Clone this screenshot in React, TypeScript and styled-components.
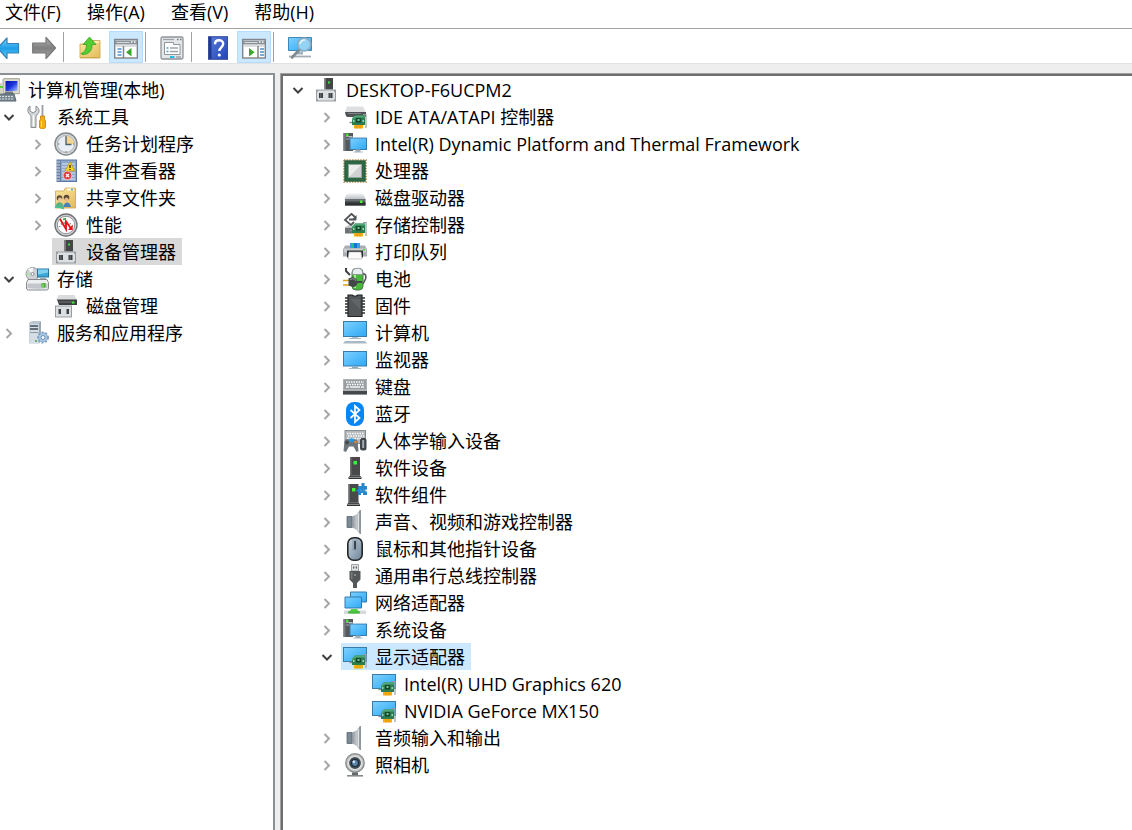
import React, { useState } from 'react';
import styled, { createGlobalStyle } from 'styled-components';

const uiFont = '"Open Sans", "Noto Sans CJK SC", sans-serif';

const GlobalStyle = createGlobalStyle`
  * { box-sizing: border-box; }
  body { margin: 0; background: #eeeeee; color: #000; font-family: ${uiFont}; font-size: 18px; }
  button { font: inherit; color: inherit; background: none; border: 0; padding: 0; }
  ul { list-style: none; margin: 0; padding: 0; }
`;

const Window = styled.div`
  display: flex;
  flex-direction: column;
  min-height: 100vh;
  overflow: hidden;
`;

const MenuBar = styled.nav`
  display: flex;
  gap: 26px;
  height: 28px;
  padding: 0 5px;
  background: #fff;
`;

const MenuItem = styled.button`
  height: 25px;
  line-height: 25px;
  white-space: nowrap;
`;

const Toolbar = styled.div`
  display: flex;
  align-items: center;
  gap: 2px;
  height: 36px;
  padding-top: 2px;
  margin-left: -9px;
  background: #fff;
  border-top: 1px solid #a3a3a3;
  border-bottom: 1px solid #e2e2e2;
`;

const ToolButton = styled.button<{ $active?: boolean }>`
  display: flex;
  align-items: center;
  justify-content: center;
  flex: none;
  width: 34px;
  height: 32px;
  padding-top: 2px;
  background: ${(p) => (p.$active ? '#cce8ff' : 'transparent')};
  border: 1px solid ${(p) => (p.$active ? '#b3dcff' : 'transparent')};
`;

const Separator = styled.span`
  flex: none;
  width: 2px;
  height: 30px;
  margin-right: 6px;
  background: #fff;
  border-left: 1px solid #a0a0a0;
`;

const Panes = styled.main`
  display: grid;
  grid-template-columns: 275px minmax(0, 1fr);
  gap: 5px;
  flex: 1;
  padding-top: 9px;
`;

const ConsolePane = styled.section`
  overflow: hidden;
  padding-top: 1px;
  background: #fff;
  border: solid #8b9097;
  border-width: 2px 2px 0 0;
`;

const DevicePane = styled.section`
  overflow: hidden;
  padding: 2px 0 24px 8px;
  background: #fff;
  border: solid #a0a0a0;
  border-width: 1px 0 0 1px;
  box-shadow: inset 2px 2px 0 #6e6e6e;
`;

const ScrolledTree = styled.ul`
  margin-left: -29px;
`;

const Row = styled.div<{ $depth: number }>`
  display: flex;
  align-items: center;
  height: 27px;
  padding-left: ${(p) => p.$depth * 29}px;
`;

const Twisty = styled.button`
  flex: none;
  display: flex;
  width: 23px;
  height: 27px;
  padding: 8px 0 0 3px;
`;

const NodeButton = styled.button<{ $tone?: string }>`
  display: flex;
  align-items: center;
  gap: 8px;
  height: 27px;
  padding: 0 6px 0 2px;
  white-space: nowrap;
  background: ${(p) => p.$tone || 'transparent'};
`;

const NodeText = styled.span`
  line-height: 26px;
`;

const Defs = styled.svg`
  position: absolute;
`;

/* ---------- shared drawing parts ---------- */

const Gradients = () => (
  <Defs width="0" height="0" aria-hidden="true">
    <defs>
      <linearGradient id="screen" x1="0" y1="0" x2="1" y2="1">
        <stop offset="0" stopColor="#7fd0ff" /><stop offset=".5" stopColor="#55bdfb" /><stop offset="1" stopColor="#2fa8f5" />
      </linearGradient>
      <linearGradient id="blueArrow" x1="0" y1="0" x2="0" y2="1">
        <stop offset="0" stopColor="#7ad3fb" /><stop offset=".5" stopColor="#1f9ee8" /><stop offset="1" stopColor="#5ccdf8" />
      </linearGradient>
      <linearGradient id="grayArrow" x1="0" y1="0" x2="0" y2="1">
        <stop offset="0" stopColor="#b5b5b5" /><stop offset=".5" stopColor="#7f7f7f" /><stop offset="1" stopColor="#a9a9a9" />
      </linearGradient>
      <linearGradient id="folder" x1="0" y1="0" x2="1" y2="1">
        <stop offset="0" stopColor="#fbe7a4" /><stop offset="1" stopColor="#e3bb58" />
      </linearGradient>
      <linearGradient id="metal" x1="0" y1="0" x2="0" y2="1">
        <stop offset="0" stopColor="#f0f2f4" /><stop offset="1" stopColor="#b9bdc2" />
      </linearGradient>
      <linearGradient id="help" x1="0" y1="0" x2="1" y2="1">
        <stop offset="0" stopColor="#5a7bdc" /><stop offset="1" stopColor="#2346b4" />
      </linearGradient>
      <linearGradient id="speaker" x1="0" y1="0" x2="1" y2="0">
        <stop offset="0" stopColor="#8d949b" /><stop offset=".6" stopColor="#c5cacf" /><stop offset="1" stopColor="#8b9299" />
      </linearGradient>
      <linearGradient id="navy" x1="0" y1="0" x2="1" y2="1">
        <stop offset="0" stopColor="#0713a5" /><stop offset=".5" stopColor="#1a36e0" /><stop offset="1" stopColor="#a9c3ff" />
      </linearGradient>
      <linearGradient id="mouseBody" x1="0" y1="0" x2="1" y2="1">
        <stop offset="0" stopColor="#c9d5df" /><stop offset="1" stopColor="#6d8499" />
      </linearGradient>
    </defs>
  </Defs>
);

const Icon = ({ children }: { children: React.ReactNode }) => (
  <svg width="24" height="24" viewBox="0 0 24 24" aria-hidden="true">{children}</svg>
);

const Card = () => (
  <g>
    <path d="M6.500 17.500h3" stroke="#8b9094" strokeWidth="1.500" />
    <path d="M9 13.500l3-3h10v9.500H9z" fill="#2d7d51" />
    <path d="M9 13.500l3-3h10v2H13l-4 3z" fill="#4fa777" />
    <rect x="13" y="13" width="5" height="4.500" fill="#15472b" />
    <rect x="14.500" y="14" width="2" height="2" fill="#72c596" />
    <rect x="10" y="15" width="1.500" height="2" fill="#9ad4b2" />
    <rect x="19.500" y="15" width="1.500" height="2" fill="#9ad4b2" />
    <path d="M11 20h9v3.500h-9z" fill="#f5ad12" />
    <path d="M14 20.500v3M17 20.500v3" stroke="#d98a00" strokeWidth=".7" />
    <path d="M20 9.500h3v13.500" fill="none" stroke="#999fa3" strokeWidth="1.200" />
  </g>
);

const Base = () => (
  <g>
    <rect x="2.500" y="12" width="19" height="11" fill="#dcdfe1" stroke="#999da0" />
    <rect x="5" y="15" width="4" height="5" fill="#3b3e40" /><rect x="14.500" y="15" width="4" height="5" fill="#3b3e40" />
    <rect x="6" y="15" width="1.500" height="5" fill="#5f6366" /><rect x="15.500" y="15" width="1.500" height="5" fill="#5f6366" />
    <path d="M3 13h1M20 13h1M3 22h1M20 22h1" stroke="#777" />
  </g>
);

const Tower = () => (
  <g>
    <path d="M4.500 1h10v18.500h-10z" fill="#47494a" />
    <path d="M4.500 1h1.500v18.500h-1.500z" fill="#6a6d6f" />
    <rect x="8" y="5" width="3.500" height="3.500" fill="#3ef23a" />
    <path d="M4.500 19.500h10l1.500 2v1.500H3v-1.500z" fill="#303233" /><path d="M3.500 21.300h12" stroke="#a3a5a7" />
  </g>
);

const icons: Record<string, React.ReactNode> = {
  back: <path d="M1.500 12L11 2v5.500h11.500v9.500H11v5.500z" fill="url(#blueArrow)" stroke="#3381b8" strokeWidth="1.200" strokeLinejoin="round" />,
  forward: <path d="M23.500 12L14 1.500v5.500H.7v10H14v5.500z" fill="url(#grayArrow)" stroke="#777" strokeWidth="1.200" strokeLinejoin="round" />,
  up: <g>
    <path d="M2 8h9l2-3.500h9V22H2z" fill="url(#folder)" stroke="#c9a24b" strokeWidth=".8" />
    <path d="M14 6h7" stroke="#fff5cf" strokeWidth="1.500" />
    <path d="M3 17.500c4-1.500 5.500-4.500 5.500-9H5L11.500 1 18 8.500h-4c.5 6-3.500 10.500-10 10z" fill="#55cc32" stroke="#2c9c1d" strokeWidth=".7" />
    <path d="M2.500 21.500h19" stroke="#d1a849" />
  </g>,
  treePane: <g>
    <rect x=".7" y="3.500" width="22.600" height="18.500" fill="#fff" stroke="#7e858c" strokeWidth="1.400" />
    <path d="M1 4.500h22v4H1z" fill="#8b9299" /><path d="M2.500 6.500h13" stroke="#d8dcdf" /><path d="M17 6h1.500M20 6h1.500" stroke="#fff" strokeWidth="1.500" />
    <path d="M1.500 10h21" stroke="#c3c8cc" strokeWidth="1.200" />
    <path d="M9.500 10v12" stroke="#7e858c" strokeWidth="1.500" />
    <path d="M3.500 13h4M3.500 16h4M3.500 19h4" stroke="#4c90cb" strokeWidth="1.500" />
    <path d="M17.500 12v8.500L12 16.200z" fill="#37a82b" />
  </g>,
  actionPane: <g>
    <rect x=".7" y="3.500" width="22.600" height="18.500" fill="#fff" stroke="#7e858c" strokeWidth="1.400" />
    <path d="M1 4.500h22v4H1z" fill="#8b9299" /><path d="M2.500 6.500h13" stroke="#d8dcdf" /><path d="M17 6h1.500M20 6h1.500" stroke="#fff" strokeWidth="1.500" />
    <path d="M1.500 10h21" stroke="#c3c8cc" strokeWidth="1.200" />
    <path d="M16 10v12" stroke="#7e858c" strokeWidth="1.500" />
    <path d="M18 13h4M18 16h4M18 19h4" stroke="#4c90cb" strokeWidth="1.500" />
    <path d="M7 12v8.500l5.500-4.300z" fill="#37a82b" />
  </g>,
  properties: <g>
    <rect x="1" y="1" width="22" height="22" rx="1.500" fill="#e4e7e9" stroke="#8e9499" strokeWidth="1.300" />
    <path d="M3 3.500h11" stroke="#9da3a8" strokeWidth="1.300" /><path d="M17 3.500h1.500M20 3.500h1.500" stroke="#6f777d" strokeWidth="1.500" />
    <path d="M4.500 6.500h9v2h6.500v10h-15.500z" fill="#fff" stroke="#8f969b" />
    <path d="M6.500 12h2M6.500 15.500h2" stroke="#4b9fd0" strokeWidth="1.500" /><path d="M10 12h8M10 15.500h8" stroke="#9ea4a9" strokeWidth="1.300" />
    <path d="M10 21h4.500" stroke="#21bdeb" strokeWidth="2" /><path d="M16 21h5" stroke="#9ea4a9" strokeWidth="1.500" />
  </g>,
  help: <g>
    <rect x="2.500" y=".7" width="19" height="22.600" fill="url(#help)" stroke="#354d9c" />
    <path d="M3 1h2.500v22H3z" fill="#203a91" />
    <path d="M9 8.200c0-5.200 8.200-5.200 8.200-.4 0 3.400-3.900 3.600-3.900 7.200" fill="none" stroke="#fff" strokeWidth="2.400" /><circle cx="13.300" cy="19" r="1.600" fill="#fff" />
  </g>,
  scan: <g>
    <path d="M.5 1.500h23v13H.5z" fill="url(#screen)" stroke="#3b87b5" />
    <path d="M9 15.500h6v3H9z" fill="#9fb0bc" /><path d="M1 20.500h22" stroke="#a5adb4" strokeWidth="1.800" />
    <path d="M11.500 13.500L4 21.500" stroke="#7f8a92" strokeWidth="2.600" strokeLinecap="round" />
    <circle cx="16.200" cy="8.500" r="6.500" fill="#a5daf5" fillOpacity=".8" stroke="#8caabd" strokeWidth="1.600" />
    <path d="M12 8a4.500 4.500 0 015-4" fill="none" stroke="#e6f7ff" strokeWidth="1.500" />
  </g>,
  management: <g>
    <rect x="7" y=".7" width="17" height="15" rx="1" fill="#dcd9cb" stroke="#a09e93" />
    <rect x="9.500" y="3" width="12" height="10" fill="url(#navy)" />
    <path d="M0 5h6v10H0z" fill="#d6d3c6" /><path d="M3 9h4" stroke="#55d531" strokeWidth="2" />
    <path d="M9 13.500h8v3H9z" fill="#72787d" />
    <path d="M2 16h16l2 7H1z" fill="#7b8a92" stroke="#55656e" /><path d="M3 18.500h15M3 21h15" stroke="#d3dbe0" strokeDasharray="2 1" />
  </g>,
  tools: <g transform="translate(1 0)">
    <path d="M4 1v5l3 2 3-2V1c5 3 3 8 0 9.500v12H5v-12C1 8 1 3 4 1z" fill="#d5d8da" stroke="#888d91" />
    <path d="M7.500 10v11" stroke="#fff" strokeWidth="1.200" />
    <path d="M16.500 0v11" stroke="#999fa4" strokeWidth="1.800" />
    <path d="M14.500 11h4v3l1 2v6.500c0 1.500-6 1.500-6 0V16l1-2z" fill="#f3af13" stroke="#c57f00" strokeWidth=".8" /><path d="M15.500 16v6" stroke="#ffdf78" />
  </g>,
  clock: <g>
    <circle cx="12" cy="12" r="11" fill="#d7dadd" stroke="#84898d" strokeWidth="1.500" />
    <circle cx="12" cy="12" r="8.500" fill="#e9eff5" stroke="#a9afb4" />
    <path d="M12 12V4a8 8 0 018 8z" fill="#f3d493" />
    <path d="M12 4.500V12.500h5.500" fill="none" stroke="#4d6470" strokeWidth="1.400" />
    <path d="M12 4v1M12 19v1.500M4 12h1.500M19 12h1" stroke="#777" />
  </g>,
  events: <g>
    <rect x="3" y="1" width="19.500" height="21.500" fill="#8ea7cb" stroke="#5876a8" />
    <path d="M8 5h13M8 8h13M8 11h13M8 14h13M8 17h13M8 20h13" stroke="#dae5f3" />
    <path d="M3 1.500h4v21H3z" fill="#6680a5" /><path d="M2 3h4M2 6h4M2 9h4M2 12h4M2 15h4M2 18h4M2 21h4" stroke="#d6dadd" strokeWidth="1.200" />
    <path d="M16 3l5 9H11z" fill="#f9d41b" stroke="#b4921e" strokeWidth=".7" /><path d="M16 6v3M16 10v1" stroke="#4c3d07" strokeWidth="1.500" />
    <circle cx="13.500" cy="16.500" r="4.300" fill="#dc3e42" stroke="#ffd9d9" strokeWidth=".7" /><path d="M12 15l3 3M15 15l-3 3" stroke="#fff" strokeWidth="1.300" />
  </g>,
  shares: <g>
    <path d="M1.500 5h8l2-3h10v20h-20z" fill="url(#folder)" stroke="#cda550" strokeWidth=".8" /><path d="M13 3.500h7" stroke="#fff8dc" strokeWidth="2" /><path d="M17 3.500h2" stroke="#4b9ecb" strokeWidth="1.500" />
    <circle cx="5.500" cy="12" r="2.800" fill="#5e4c35" /><circle cx="6" cy="13.500" r="2" fill="#ecc59c" />
    <circle cx="12.500" cy="11.500" r="2.800" fill="#5b4735" /><circle cx="12.500" cy="13.500" r="2" fill="#e7b98b" />
    <path d="M1.500 22c0-7 7.500-8 8.500 0z" fill="#5cae86" /><path d="M9.500 21c.5-6 6.500-6 7.500 0z" fill="#4b81b8" />
    <path d="M1 21.500c4-2.500 6 1.500 9 .5" fill="none" stroke="#48c28d" strokeWidth="2" />
  </g>,
  performance: <g>
    <circle cx="12" cy="12" r="11" fill="#d1d3d5" stroke="#717578" strokeWidth="1.400" /><circle cx="12" cy="12" r="8.700" fill="#fff" stroke="#929699" />
    <path d="M5.500 14a7 7 0 0113 0" fill="none" stroke="#81898e" strokeWidth="2" strokeDasharray="1 2" /><path d="M9 6.500l3-1" stroke="#3d9c47" strokeWidth="1.500" />
    <path d="M6 6l6 10V8.500l5 7" fill="none" stroke="#e01919" strokeWidth="1.900" /><path d="M18.700 11.500v5.500H14z" fill="#e01919" />
  </g>,
  device: <g><path d="M10.500 0h8.500v11.500h-8.500z" fill="#434546" /><path d="M10.500 0h1.500v11h-1.500z" fill="#777" /><rect x="14" y="3.500" width="2" height="2" fill="#3ae33c" /><Base /></g>,
  storage: <g>
    <circle cx="7.500" cy="7" r="6.500" fill="#cfd2d4" stroke="#93999d" /><path d="M7.500 7L3 2.500a6 6 0 015-1.700z" fill="#f7f7f7" /><path d="M1.500 6L6 7l-4 3z" fill="#b6e2b3" /><circle cx="7.500" cy="7" r="1.500" fill="#fff" stroke="#8d9296" />
    <rect x="12.500" y="2" width="11" height="8" fill="#3ba8d8" stroke="#27739b" /><path d="M13 2.500h10v3l-10 2z" fill="#82d0ef" /><path d="M15 11.500h6" stroke="#9da5aa" />
    <path d="M3 12.500h19l1.500 3v5.500q0 2-2 2h-18q-2 0-2-2v-5.500z" fill="#eceef0" stroke="#868b90" /><path d="M2.500 16.500h20v4.500q-10 1.500-20 0z" fill="#c3c6cc" /><rect x="16.500" y="16" width="4" height="4.500" fill="#48ad31" /><path d="M18 16.500v4" stroke="#9aef79" />
  </g>,
  diskMgmt: <g><path d="M4.500 1h16l2.500 5H2z" fill="#d9dbdd" /><path d="M3 5.500h20V11H5z" fill="#3c3f41" /><path d="M5 8h13" stroke="#77797b" /><rect x="18" y="7.500" width="2.500" height="2" fill="#48ec3e" /><rect x="1.500" y="12" width="16" height="11" fill="#dcdfe1" stroke="#999da0" /><path d="M4.500 15h2.500v5H4.500zM12.500 15H15v5h-2.500z" fill="#3d4042" /></g>,
  services: <g transform="translate(1 0)">
    <path d="M3 2l3-2h9l-2 2v20.500H3z" fill="#bac6d0" /><path d="M13 2l2-2v20l-2 2.500z" fill="#9aa8b3" /><path d="M3.500 3h9v19h-9z" fill="#d5dee5" />
    <path d="M4 5h8M4 8h8" stroke="#3f4d57" strokeWidth="1.300" /><path d="M4 11.500h8" stroke="#8999a4" /><path d="M9 20h2" stroke="#3da944" strokeWidth="1.500" />
    <circle cx="17" cy="16.500" r="5" fill="#8eb1d1" stroke="#7fa3c6" strokeWidth="2" strokeDasharray="2 1.600" /><circle cx="17" cy="16.500" r="4" fill="#a9c7e2" /><circle cx="17" cy="16.500" r="2" fill="#f4f8fb" stroke="#6f94b8" />
  </g>,
  ide: <g><path d="M4 1.500h16l3 6H2z" fill="#dddfe1" /><path d="M2 7h21v5H4q-2-2-2-5z" fill="#505355" /><path d="M5 8.500h13" stroke="#808386" /><Card /></g>,
  system: <g>
    <path d="M.5 1h9.500v18H.5z" fill="#55595c" /><path d="M.5 1h2v18h-2z" fill="#777c7f" /><path d="M3 4.500h6M3 7h6" stroke="#a4a9ac" /><rect x="3" y="1.500" width="2.500" height="2.500" fill="#40e52c" />
    <rect x="7" y="6" width="16.500" height="11.500" fill="url(#screen)" stroke="#377cad" /><path d="M6 5h18" stroke="#e7eef2" strokeWidth=".6" /><path d="M13 18h4v1.500h-4zM10.500 20h9" fill="#91a3b1" stroke="#a3b2be" />
  </g>,
  cpu: <g>
    <rect x="1" y="1" width="22" height="22" fill="none" stroke="#b5924b" strokeWidth="1.600" strokeDasharray="1.500 1.200" /><rect x="1.800" y="1.800" width="20.400" height="20.400" fill="#2d6947" stroke="#19472d" strokeWidth=".7" />
    <rect x="5.500" y="5.500" width="13" height="13" fill="#cfd2d1" stroke="#8fa79a" /><path d="M6 6h12L6 18z" fill="#ededed" />
  </g>,
  disk: <g transform="translate(0 1)"><path d="M5 6.500h14q2 0 3.500 6h-21q1.500-6 3.500-6z" fill="url(#metal)" /><path d="M2 12h20.500v6.500H2z" fill="#505457" /><path d="M2 15.500h20.500v3H2z" fill="#2f3233" /><path d="M2 13h20" stroke="#84898c" /><rect x="17" y="13.500" width="2.500" height="2.500" fill="#4cf142" /></g>,
  storageCtl: <g><path d="M2 14.500h15v6H2z" fill="#6d7275" /><path d="M2 14l4-2 5 2z" fill="#c9cccd" /><path d="M13 5L8.500.8 2 7l6 5 3-3M6 6.500h7" fill="none" stroke="#515558" strokeWidth="1.800" /><path d="M13.500 2v5h-5z" fill="#515558" /><Card /></g>,
  printer: <g>
    <path d="M7 3h10v5H7z" fill="#3c9fe0" /><path d="M8 3h3v5H8z" fill="#21bd83" /><path d="M11 3h3v5h-3z" fill="#1970d3" />
    <path d="M2 5.500h5V8h10V5.500h5l2 4v7H0v-7z" fill="#a9adb0" /><path d="M1 8.500h22v4H1z" fill="#c9ccce" /><path d="M4 10.500h16v7H4z" fill="#2c2e30" /><path d="M6 12h12l1 7H5z" fill="#fafafa" stroke="#aeb2b4" strokeWidth=".6" /><rect x="20" y="9" width="2" height="1.500" fill="#47df33" />
  </g>,
  battery: <g>
    <rect x="9" y="1.500" width="11" height="21.500" rx="4" fill="#49b73b" stroke="#4f7850" /><path d="M9.500 5c0-5 10-5 10 0v2.500h-10z" fill="#e9edf0" stroke="#8a9298" strokeWidth=".8" /><path d="M12 8v13" stroke="#a0ee91" strokeWidth="2" />
    <path d="M20 7h1.500q2 1 1 5L20 17" fill="none" stroke="#505458" strokeWidth="1.600" /><path d="M3 1v3l4 4" fill="none" stroke="#3f4345" strokeWidth="2" />
    <path d="M0 13.500h6M0 18h6" stroke="#dba11c" strokeWidth="1.600" /><path d="M5.500 11.500l4-1.500q5 1 5 5.500-1 5-5 4.500l-4-1.500z" fill="#424648" /><path d="M14 15h5" stroke="#424648" strokeWidth="2" /><path d="M7 12.500q5-2 6 1.500" fill="none" stroke="#989da0" />
  </g>,
  firmware: <g><path d="M2 4h20M2 7h20M2 10h20M2 13h20M2 16h20M2 19h20" stroke="#2e3031" strokeWidth="1.400" /><path d="M5 1h4q3 2.500 6 0h4v21.500H5z" fill="#55585a" stroke="#232526" strokeWidth="1.200" /><path d="M7 5h10v10z" fill="#626567" /></g>,
  computer: <g><rect x=".5" y=".5" width="23" height="15" fill="url(#screen)" stroke="#397ca8" /><path d="M9 16h6v2H9z" fill="#a6c1d1" /><path d="M6 17.500h12" stroke="#a9bac5" /><path d="M2 20h20l2 2.500H0z" fill="#a9bac6" /></g>,
  monitor: <g><rect x=".5" y="3.500" width="23" height="14.500" fill="url(#screen)" stroke="#397ca8" /><path d="M9 18.500h6v1.500H9z" fill="#8ca9bb" /><path d="M6 20.500h12" stroke="#a9bac5" /></g>,
  keyboard: <g><rect x="0" y="4" width="24" height="15.500" fill="#afb2b5" /><path d="M1 5h22v9H1z" fill="#999ea1" /><path d="M3 7h18" stroke="#fff" strokeWidth="1.500" strokeDasharray="1.500 1" /><path d="M4 9.500h17" stroke="#fff" strokeWidth="1.500" strokeDasharray="1.500 1" /><path d="M3 12h3M7 12h10M18 12h3" stroke="#f3f3f3" strokeWidth="1.500" /><path d="M0 16h24v3.500H0z" fill="#44484b" /></g>,
  bluetooth: <g><rect x="3" y="0" width="18" height="24" rx="8" fill="#0786f8" /><path d="M7.500 8l9 8-4.500 4V4l4.500 4-9 8" fill="none" stroke="#fff" strokeWidth="1.700" /></g>,
  hid: <g>
    <rect x="2" y="1.500" width="20.500" height="13" fill="#b3b7ba" stroke="#888d90" /><path d="M4 4.500h17M5 7h16M4 9.500h17" stroke="#fff" strokeWidth="1.400" strokeDasharray="1.500 1" />
    <path d="M1.500 12q1.500-3 4.500-1.500h4q3-1 4.500 1.500l1 10-2 1-3-5.500H6L3 23l-2.500-1z" fill="#6d747a" /><path d="M4 11.500v4M2 13.500h4" stroke="#3d4449" strokeWidth="1.400" />
    <rect x="6.500" y="9.500" width="4" height="3.500" fill="#189be8" /><circle cx="12.500" cy="13" r="1.300" fill="#e2882b" />
    <rect x="17" y="9" width="6.500" height="12.500" rx="2.500" fill="#3f454a" /><path d="M20.200 11v8" stroke="#a3abb1" strokeWidth="2" />
  </g>,
  software: <g transform="translate(2.500 0)"><Tower /></g>,
  component: <g><g transform="translate(1 0)"><Tower /></g><path d="M15 3h3.500V0h3v3H24v3.500h-1.500v2H24V12h-4v-2h-2v2h-3V8.500h-1.500v-2H15z" fill="#2785c9" /><path d="M18 6.500v2M21 6.500v2" stroke="#5aaee4" /></g>,
  sound: <g><path d="M4 6.500h5v11H4z" fill="#7a8995" stroke="#5b6872" strokeWidth=".8" /><path d="M9 6.500q5-1.500 8-6.500v24q-3-5-8-6.500z" fill="url(#speaker)" /><path d="M15.500 3v18" stroke="#dfe2e4" strokeWidth="1.300" /><path d="M17.300 0v24" stroke="#747d85" /></g>,
  mouse: <g><rect x="4.800" y=".8" width="14.400" height="22.400" rx="6" fill="url(#mouseBody)" stroke="#222628" strokeWidth="1.600" /><path d="M10 2v11h4V2" fill="none" stroke="#8195a6" strokeWidth=".8" /><rect x="11" y="3.500" width="2" height="9" rx="1" fill="#3b434a" /></g>,
  usb: <g><path d="M8.500.5h7V7h-7z" fill="#e2e4e4" stroke="#8b8e90" strokeWidth=".8" /><path d="M10 2.500h1.300v2H10zM12.700 2.500H14v2h-1.300z" fill="#55595a" /><path d="M6.500 7h11v8.500l-3.500 3.500v5h-4v-5l-3.500-3.500z" fill="#555859" /><path d="M8 8h1.500v7H8z" fill="#787b7c" /><circle cx="12" cy="11" r="1" fill="#9a9d9e" /></g>,
  network: <g><path d="M7.500 1h16v10h-16z" fill="url(#screen)" stroke="#337ba9" /><path d="M2 6h16.500v11H2z" fill="url(#screen)" stroke="#337ba9" /><path d="M1 19.500h22V23H1z" fill="#d6d9db" /><path d="M8.500 18h5.500l1.500 2v2.500h-9V20z" fill="#55ce46" /><path d="M5 21.300h12" stroke="#45bb3b" strokeWidth="2" /></g>,
  display: <g><rect x=".5" y="2.500" width="23" height="14" fill="url(#screen)" stroke="#397ca8" /><Card /></g>,
  camera: <g><circle cx="12" cy="10" r="9.200" fill="#c9cbcb" stroke="#8d9090" strokeWidth="1.500" /><circle cx="12" cy="10" r="6.500" fill="#424b54" stroke="#e7e7e7" strokeWidth="1.200" /><circle cx="12" cy="10" r="3.500" fill="#5c83a8" stroke="#192a38" strokeWidth="1.200" /><circle cx="10.800" cy="8.800" r="1.200" fill="#e6f1fa" /><path d="M9 19.500h6v2.500H9z" fill="#65696b" /><path d="M4 22.800h16" stroke="#7e8284" strokeWidth="1.500" /></g>,
};

/* ---------- data ---------- */

type TreeItem = { icon: string; label: string; open?: boolean; tone?: string; children?: TreeItem[] };

const consoleTree: TreeItem[] = [
  { icon: 'management', label: '计算机管理(本地)', open: true, children: [
    { icon: 'tools', label: '系统工具', open: true, children: [
      { icon: 'clock', label: '任务计划程序', open: false },
      { icon: 'events', label: '事件查看器', open: false },
      { icon: 'shares', label: '共享文件夹', open: false },
      { icon: 'performance', label: '性能', open: false },
      { icon: 'device', label: '设备管理器', tone: '#d9d9d9' },
    ] },
    { icon: 'storage', label: '存储', open: true, children: [{ icon: 'diskMgmt', label: '磁盘管理' }] },
    { icon: 'services', label: '服务和应用程序', open: false },
  ] },
];

const deviceTree: TreeItem[] = [
  { icon: 'device', label: 'DESKTOP-F6UCPM2', open: true, children: [
    { icon: 'ide', label: 'IDE ATA/ATAPI 控制器', open: false },
    { icon: 'system', label: 'Intel(R) Dynamic Platform and Thermal Framework', open: false },
    { icon: 'cpu', label: '处理器', open: false },
    { icon: 'disk', label: '磁盘驱动器', open: false },
    { icon: 'storageCtl', label: '存储控制器', open: false },
    { icon: 'printer', label: '打印队列', open: false },
    { icon: 'battery', label: '电池', open: false },
    { icon: 'firmware', label: '固件', open: false },
    { icon: 'computer', label: '计算机', open: false },
    { icon: 'monitor', label: '监视器', open: false },
    { icon: 'keyboard', label: '键盘', open: false },
    { icon: 'bluetooth', label: '蓝牙', open: false },
    { icon: 'hid', label: '人体学输入设备', open: false },
    { icon: 'software', label: '软件设备', open: false },
    { icon: 'component', label: '软件组件', open: false },
    { icon: 'sound', label: '声音、视频和游戏控制器', open: false },
    { icon: 'mouse', label: '鼠标和其他指针设备', open: false },
    { icon: 'usb', label: '通用串行总线控制器', open: false },
    { icon: 'network', label: '网络适配器', open: false },
    { icon: 'system', label: '系统设备', open: false },
    { icon: 'display', label: '显示适配器', open: true, tone: '#cce8ff', children: [
      { icon: 'display', label: 'Intel(R) UHD Graphics 620' },
      { icon: 'display', label: 'NVIDIA GeForce MX150' },
    ] },
    { icon: 'sound', label: '音频输入和输出', open: false },
    { icon: 'camera', label: '照相机', open: false },
  ] },
];

const TreeNode = ({ item, depth }: { item: TreeItem; depth: number }) => {
  const [open, setOpen] = useState(!!item.open);
  const expandable = item.open !== undefined;
  return (
    <li>
      <Row $depth={depth}>
        <Twisty aria-label={item.label} aria-expanded={expandable ? open : undefined} disabled={!expandable} onClick={() => setOpen(!open)}>
          {expandable && (
            <svg width="12" height="13" viewBox="0 0 12 13" aria-hidden="true">
              {open
                ? <path d="M1.500 4L6 8.500 10.500 4" fill="none" stroke="#404040" strokeWidth="2" />
                : <path d="M3.500 2L8 6.500 3.500 11" fill="none" stroke="#a6a6a6" strokeWidth="2" />}
            </svg>
          )}
        </Twisty>
        <NodeButton $tone={item.tone}>
          <Icon>{icons[item.icon]}</Icon>
          <NodeText>{item.label}</NodeText>
        </NodeButton>
      </Row>
      {open && item.children && (
        <ul>{item.children.map((child) => <TreeNode key={child.label} item={child} depth={depth + 1} />)}</ul>
      )}
    </li>
  );
};

const tools: ({ icon: string; label: string; active?: boolean } | null)[] = [
  { icon: 'back', label: '后退' }, { icon: 'forward', label: '前进' }, null,
  { icon: 'up', label: '向上' }, { icon: 'treePane', label: '显示控制台树', active: true }, null,
  { icon: 'properties', label: '属性' }, null,
  { icon: 'help', label: '帮助' }, { icon: 'actionPane', label: '显示操作窗格', active: true }, null,
  { icon: 'scan', label: '扫描硬件' },
];

export default function App() {
  return (
    <Window>
      <GlobalStyle />
      <Gradients />
      <MenuBar>
        {['文件(F)', '操作(A)', '查看(V)', '帮助(H)'].map((m) => <MenuItem key={m}>{m}</MenuItem>)}
      </MenuBar>
      <Toolbar>
        {tools.map((t, i) => t
          ? <ToolButton key={i} $active={t.active} aria-label={t.label}><Icon>{icons[t.icon]}</Icon></ToolButton>
          : <Separator key={i} />)}
      </Toolbar>
      <Panes>
        <ConsolePane>
          <ScrolledTree>{consoleTree.map((n) => <TreeNode key={n.label} item={n} depth={0} />)}</ScrolledTree>
        </ConsolePane>
        <DevicePane>
          <ul>{deviceTree.map((n) => <TreeNode key={n.label} item={n} depth={0} />)}</ul>
        </DevicePane>
      </Panes>
    </Window>
  );
}
